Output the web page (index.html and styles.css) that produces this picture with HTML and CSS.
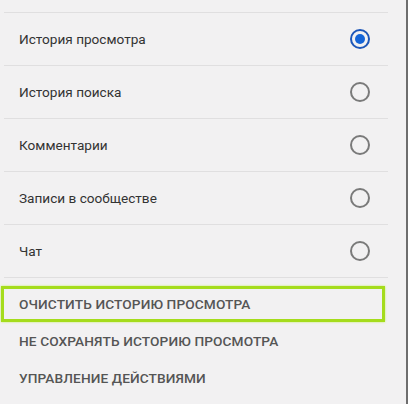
FILE: index.html
```html
<!DOCTYPE html>
<html lang="ru">
<head>
<meta charset="utf-8">
<link rel="stylesheet" href="styles.css">
</head>
<body>
<div class="panel">
  <ul class="options">
    <li class="option"><span class="label">История просмотра</span><span class="radio checked"></span></li>
    <li class="option"><span class="label">История поиска</span><span class="radio"></span></li>
    <li class="option"><span class="label">Комментарии</span><span class="radio"></span></li>
    <li class="option"><span class="label">Записи в сообществе</span><span class="radio"></span></li>
    <li class="option"><span class="label">Чат</span><span class="radio"></span></li>
  </ul>
  <div class="actions">
    <div class="action highlighted">ОЧИСТИТЬ ИСТОРИЮ ПРОСМОТРА</div>
    <div class="action">НЕ СОХРАНЯТЬ ИСТОРИЮ ПРОСМОТРА</div>
    <div class="action">УПРАВЛЕНИЕ ДЕЙСТВИЯМИ</div>
  </div>
</div>
</body>
</html>
```

FILE: styles.css
```css
html, body {
  margin: 0;
  padding: 0;
  background: #f2f1f2;
}
body {
  font-family: Roboto, "Noto Sans", "Liberation Sans", sans-serif;
  width: 408px;
  height: 404px;
  overflow: hidden;
}
.panel {
  box-sizing: border-box;
  width: 408px;
  height: 404px;
  padding-top: 12px;
  border-right: 2px solid #6e6e6e;
}
.options {
  list-style: none;
  margin: 0 0 0 4px;
  padding: 0;
  width: 384px;
  border-top: 1px solid #e0dfe0;
}
.option {
  display: flex;
  align-items: center;
  justify-content: space-between;
  height: 52px;
  border-bottom: 1px solid #e0dfe0;
  padding: 0 18px 0 15px;
}
.label {
  font-size: 13.6px;
  color: #333333;
}
.radio {
  box-sizing: border-box;
  width: 20px;
  height: 20px;
  border-radius: 50%;
  border: 2px solid #7a7a7a;
  position: relative;
}
.radio.checked {
  border-color: #1d56b8;
}
.radio.checked::after {
  content: "";
  position: absolute;
  left: 3px;
  top: 3px;
  width: 10px;
  height: 10px;
  border-radius: 50%;
  background: #1565d8;
}
.actions {
  display: flex;
  flex-direction: column;
  padding-top: 8px;
}
.action {
  box-sizing: border-box;
  height: 37px;
  display: flex;
  align-items: center;
  padding-left: 19px;
  font-size: 13.7px;
  font-weight: 500;
  color: #555555;
  letter-spacing: 0.1px;
}
.action.highlighted {
  margin-left: 1px;
  width: 384px;
  height: 36px;
  padding-left: 15px;
  border: 3px solid #a5dc1c;
  box-shadow: 0 0 2px #c6f060;
}
```
